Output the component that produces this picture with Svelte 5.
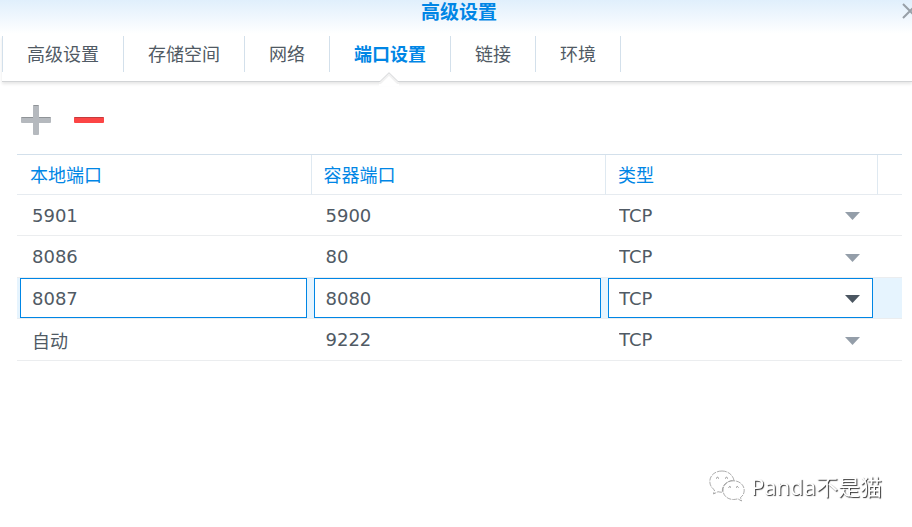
<script lang="ts">
    type PortRule = { local: string; container: string; type: string };

    const tabs = ["高级设置", "存储空间", "网络", "端口设置", "链接", "环境"];
    const protocols = ["TCP", "UDP"];

    let activeTab = $state("端口设置");
    let selected = $state(2);
    let rules = $state<PortRule[]>([
        { local: "5901", container: "5900", type: "TCP" },
        { local: "8086", container: "80", type: "TCP" },
        { local: "8087", container: "8080", type: "TCP" },
        { local: "自动", container: "9222", type: "TCP" },
    ]);

    function addRule() {
        rules.push({ local: "自动", container: "", type: "TCP" });
        selected = rules.length - 1;
    }

    function removeRule() {
        rules.splice(selected, 1);
        selected = Math.min(selected, rules.length - 1);
    }
</script>

<main class="dialog">
    <header class="title-bar">
        <h1>高级设置</h1>
        <button class="close" aria-label="关闭">
            <svg width="16" height="16" viewBox="0 0 16 16">
                <path d="M1 1L15 15M15 1L1 15" />
            </svg>
        </button>
    </header>

    <nav class="tabs">
        {#each tabs as tab}
            <button
                class="tab"
                class:active={tab === activeTab}
                onclick={() => (activeTab = tab)}
            >
                {tab}
                {#if tab === activeTab}
                    <svg class="notch" width="20" height="14" viewBox="0 0 20 14">
                        <path class="cover" d="M0 14V9.5H1L10 .5L19 9.5H20V14Z" />
                        <path class="soft" d="M0 11H1.500L10 2.500L18.500 11H20" />
                        <path class="edge" d="M0 9.5H1L10 .7L19 9.5H20" />
                    </svg>
                {/if}
            </button>
        {/each}
    </nav>

    <section class="content">
        <div class="toolbar">
            <button aria-label="新增" onclick={addRule}>
                <svg width="30" height="30" viewBox="0 0 30 30">
                    <rect x="0" y="12" width="30" height="6" rx="1" fill="#b5b9be" />
                    <rect x="12" y="0" width="6" height="30" rx="1" fill="#b5b9be" />
                    <path
                        d="M.5 12.5H12M18 12.5H29.5M12.5 .5H17.5"
                        stroke="#8f9397"
                    />
                </svg>
            </button>
            <button aria-label="删除" onclick={removeRule}>
                <svg width="30" height="30" viewBox="0 0 30 30">
                    <rect x="0" y="12" width="30" height="6" rx="1" fill="#fc4545" />
                    <path d="M.5 12.5H29.5" stroke="#c43b3d" />
                </svg>
            </button>
        </div>

        <table>
            <colgroup>
                <col />
                <col />
                <col class="col-type" />
                <col class="col-rest" />
            </colgroup>
            <thead>
                <tr>
                    <th>本地端口</th>
                    <th>容器端口</th>
                    <th>类型</th>
                    <th></th>
                </tr>
            </thead>
            <tbody>
                {#each rules as rule, i}
                    <tr
                        class:selected={i === selected}
                        onfocusin={() => (selected = i)}
                    >
                        <td>
                            <input
                                type="text"
                                aria-label="本地端口"
                                bind:value={rule.local}
                            />
                        </td>
                        <td>
                            <input
                                type="text"
                                aria-label="容器端口"
                                bind:value={rule.container}
                            />
                        </td>
                        <td>
                            <div class="select-box">
                                <select aria-label="类型" bind:value={rule.type}>
                                    {#each protocols as protocol}
                                        <option>{protocol}</option>
                                    {/each}
                                </select>
                                <svg
                                    class="arrow"
                                    width="15"
                                    height="8"
                                    viewBox="0 0 15 8"
                                >
                                    <path d="M0 0H15L7.5 8Z" />
                                </svg>
                            </div>
                        </td>
                        <td></td>
                    </tr>
                {/each}
            </tbody>
        </table>
    </section>

    <div class="watermark">
        <svg width="36" height="32" viewBox="0 0 36 32">
            <g class="bubble">
                <path
                    d="M13 1C6 1 .8 5.500 .8 11.500C.8 15 2.600 18 5.500 20L4.500 24L9 21.700C10.500 22.100 12 22.300 13.500 22.200C12.500 16 17 10.500 25 10.500C24 5 19 1 13 1Z"
                />
                <path
                    d="M24.500 10.800C18.500 10.800 14 15 14 20.200C14 25.500 18.500 29.500 24.500 29.500C26 29.500 27.500 29.200 28.800 28.800L32.500 31L31.500 27.500C34 25.800 35.200 23.200 35.200 20.200C35.200 15 30.500 10.800 24.500 10.800Z"
                />
            </g>
            <g class="eyes">
                <path d="M7 8.500Q8.500 6 10 8.500M16 8.500Q17.500 6 19 8.500" />
                <path d="M19.500 17.500Q21 15.500 22 17.500M27 17.500Q28.500 15.500 29.500 17.500" />
            </g>
        </svg>
        <span>Panda不是猫</span>
    </div>
</main>

<style>
    :global(body) {
        margin: 0;
        background: #fff;
    }

    .dialog {
        min-height: 100vh;
        font-family: "DejaVu Sans", "Noto Sans CJK SC", sans-serif;
        font-size: 18px;
        color: #505a64;
    }

    button {
        padding: 0;
        border: none;
        background: none;
        font: inherit;
        color: inherit;
        cursor: pointer;
    }

    svg {
        display: block;
    }

    /* Title */
    .title-bar {
        position: relative;
        height: 36px;
        padding-left: 6px;
        overflow: hidden;
        background: linear-gradient(#e0effc, #fff 34px);
    }

    h1 {
        margin: 0;
        font-size: 19px;
        line-height: 24px;
        text-align: center;
        color: #0086e5;
    }

    .close {
        position: absolute;
        top: 3px;
        right: -6px;
    }

    .close path {
        stroke: #98a0a8;
        stroke-width: 2;
    }

    /* Tabs */
    .tabs {
        display: flex;
        margin-left: 2px;
        padding-bottom: 9px;
        border-bottom: 1px solid #d2d4d6;
        box-shadow: 0 2px 3px rgba(0, 0, 0, 0.1);
    }

    .tab {
        position: relative;
        height: 36px;
        padding: 0 24px 2px;
        border-left: 1px solid #d3e0eb;
        white-space: nowrap;
    }

    .tab:last-child {
        border-right: 1px solid #d3e0eb;
    }

    .tab.active {
        font-weight: bold;
        color: #0086e5;
    }

    .notch {
        position: absolute;
        top: 36px;
        left: calc(50% - 11px);
        fill: none;
    }

    .notch .cover {
        fill: #fff;
    }

    .notch .soft {
        stroke: #f1f1f1;
        stroke-width: 2;
    }

    .notch .edge {
        stroke: #d2d4d6;
    }

    /* Port list */
    .content {
        padding: 23px 10px 0 17px;
    }

    .toolbar {
        display: flex;
        gap: 23px;
        padding: 0 4px 19px;
    }

    table {
        width: 100%;
        table-layout: fixed;
        border-spacing: 0;
        border-top: 1px solid #d3e0eb;
    }

    .col-type {
        width: 272px;
    }

    .col-rest {
        width: 24px;
    }

    th {
        box-sizing: border-box;
        height: 40px;
        padding: 0 12px 2px;
        border-right: 1px solid #dfe9f1;
        border-bottom: 1px solid #e6ebf0;
        font-weight: normal;
        text-align: left;
        color: #0086e5;
    }

    th:last-child {
        border-right: none;
    }

    td {
        box-sizing: border-box;
        height: 41px;
        padding: 0 5px 0 2px;
        border-bottom: 1px solid #ebedef;
    }

    tr:nth-child(even) td {
        height: 42px;
    }

    th:first-child {
        padding-left: 13px;
    }

    td:first-child {
        padding-left: 3px;
    }

    input,
    select {
        display: block;
        box-sizing: border-box;
        width: 100%;
        height: 40px;
        margin: 0;
        padding: 0 10px;
        border: 1px solid transparent;
        border-radius: 0;
        outline: none;
        appearance: none;
        background: transparent;
        font: inherit;
        color: inherit;
    }

    input {
        padding: 0 11px;
    }

    .select-box {
        position: relative;
    }

    .arrow {
        position: absolute;
        top: 17px;
        right: 13px;
        fill: #949ea9;
        pointer-events: none;
    }

    .selected td {
        background: #e6f4fe;
    }

    .selected input,
    .selected select {
        border-color: #0086e5;
        background: #fff;
    }

    .selected .arrow {
        fill: #4b5661;
    }

    .watermark {
        position: fixed;
        right: 30px;
        bottom: 25px;
        display: flex;
        align-items: center;
        gap: 6px;
        font-family: "Noto Sans", "Noto Sans CJK SC", sans-serif;
        font-size: 22px;
        line-height: 32px;
        color: #fff;
        text-shadow: 1px 1px 1px #333;
        pointer-events: none;
    }

    .bubble {
        fill: #fff;
        stroke: #888;
        stroke-width: 0.7;
        stroke-dasharray: 5 1;
    }

    .eyes {
        fill: none;
        stroke: #888;
    }
</style>
